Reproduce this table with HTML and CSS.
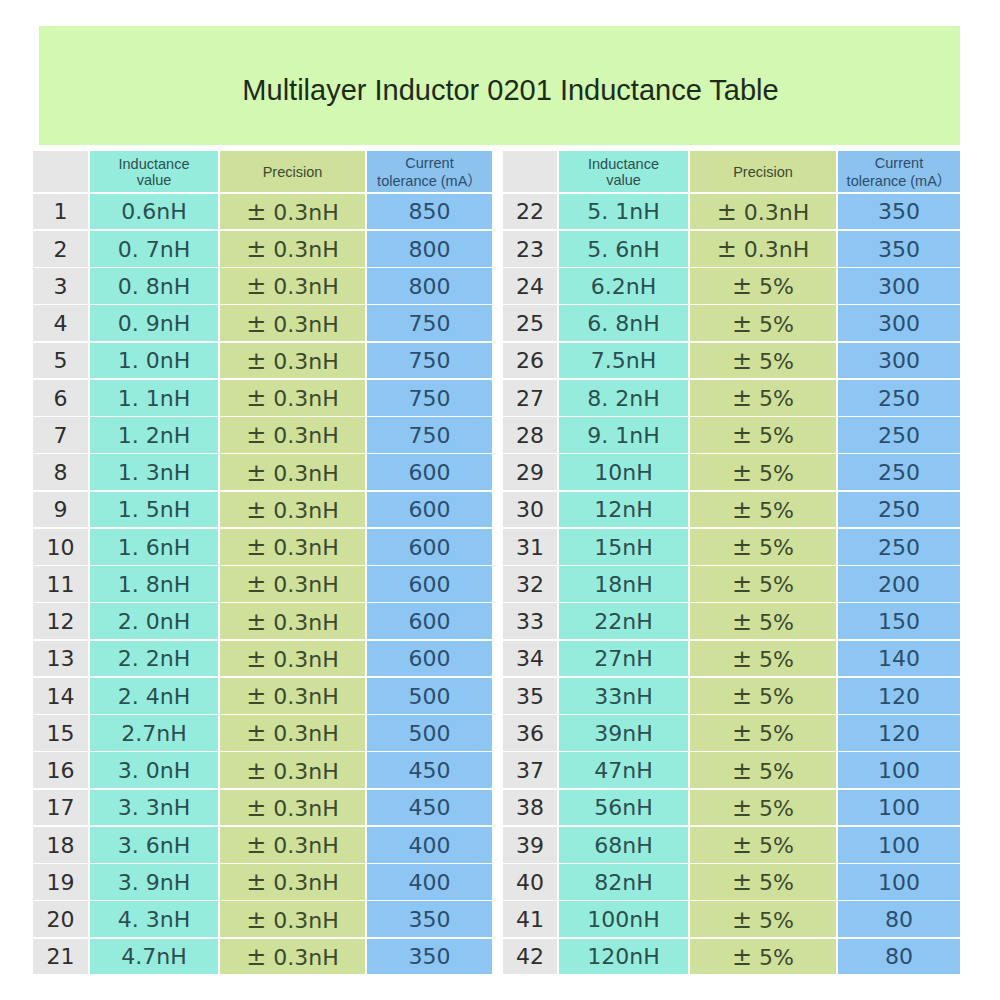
FILE: index.html
```html
<!DOCTYPE html>
<html>
<head>
<meta charset="utf-8">
<link rel="stylesheet" href="styles.css">
</head>
<body>
<div class="page">
  <div class="banner"><h1 class="title">Multilayer Inductor 0201 Inductance Table</h1></div>
  <div class="tables" id="tables"></div>
</div>
<script src="app.js"></script>
</body>
</html>
```
FILE: app.js
```js
const left = [
  ["0.6nH","± 0.3nH","850"],["0. 7nH","± 0.3nH","800"],["0. 8nH","± 0.3nH","800"],
  ["0. 9nH","± 0.3nH","750"],["1. 0nH","± 0.3nH","750"],["1. 1nH","± 0.3nH","750"],
  ["1. 2nH","± 0.3nH","750"],["1. 3nH","± 0.3nH","600"],["1. 5nH","± 0.3nH","600"],
  ["1. 6nH","± 0.3nH","600"],["1. 8nH","± 0.3nH","600"],["2. 0nH","± 0.3nH","600"],
  ["2. 2nH","± 0.3nH","600"],["2. 4nH","± 0.3nH","500"],["2.7nH","± 0.3nH","500"],
  ["3. 0nH","± 0.3nH","450"],["3. 3nH","± 0.3nH","450"],["3. 6nH","± 0.3nH","400"],
  ["3. 9nH","± 0.3nH","400"],["4. 3nH","± 0.3nH","350"],["4.7nH","± 0.3nH","350"]
];
const right = [
  ["5. 1nH","± 0.3nH","350"],["5. 6nH","± 0.3nH","350"],["6.2nH","± 5%","300"],
  ["6. 8nH","± 5%","300"],["7.5nH","± 5%","300"],["8. 2nH","± 5%","250"],
  ["9. 1nH","± 5%","250"],["10nH","± 5%","250"],["12nH","± 5%","250"],
  ["15nH","± 5%","250"],["18nH","± 5%","200"],["22nH","± 5%","150"],
  ["27nH","± 5%","140"],["33nH","± 5%","120"],["39nH","± 5%","120"],
  ["47nH","± 5%","100"],["56nH","± 5%","100"],["68nH","± 5%","100"],
  ["82nH","± 5%","100"],["100nH","± 5%","80"],["120nH","± 5%","80"]
];
function build(data, start, cls) {
  const t = document.createElement("div");
  t.className = "grid " + cls;
  let h = '<div class="c num hd"></div>' +
    '<div class="c ind hd">Inductance<br>value</div>' +
    '<div class="c pre hd">Precision</div>' +
    '<div class="c cur hd">Current<br>tolerance (mA\uFF09</div>';
  data.forEach((r, i) => {
    h += '<div class="c num">' + (start + i) + '</div>' +
      '<div class="c ind v">' + r[0] + '</div>' +
      '<div class="c pre v"><span><span class="pm">±</span>&nbsp;' + r[1].slice(2) + '</span></div>' +
      '<div class="c cur v">' + r[2] + '</div>';
  });
  t.innerHTML = h;
  return t;
}
const wrap = document.getElementById("tables");
wrap.appendChild(build(left, 1, "left"));
wrap.appendChild(build(right, 22, "right"));
```
FILE: styles.css
```css
html, body { margin: 0; padding: 0; background: #fff; }
.page { width: 1000px; height: 1000px; padding-top: 26px; box-sizing: border-box; }
.banner {
  margin-left: 39px; width: 921px; height: 119px;
  background: #d3f8b1;
  display: flex; align-items: center; justify-content: center;
  padding-top: 10px; box-sizing: border-box;
}
.title {
  margin: 0; padding-left: 22px;
  font-family: "Liberation Sans", Arial, sans-serif;
  font-weight: normal; font-size: 29px; color: #1d2b1a;
}
.tables { display: flex; gap: 11px; margin-left: 33px; margin-top: 6px; }
.grid {
  display: grid;
  grid-template-rows: 41px repeat(21, 35.75px);
  column-gap: 2px; row-gap: 1.5px;
  background: #fff;
}
.left { grid-template-columns: 55px 128px 145px 125px; }
.right { grid-template-columns: 54px 129px 146px 122px; }
.c {
  display: flex; align-items: center; justify-content: center; text-align: center;
  font-family: "DejaVu Sans", "Noto Sans CJK SC", sans-serif;
  font-size: 22px; padding-top: 1px; box-sizing: border-box;
}
.hd {
  font-family: "Liberation Sans", Arial, "Noto Sans CJK SC", sans-serif;
  font-size: 14.5px; line-height: 16px; color: #333; padding-top: 0;
}
.cur.hd { line-height: 18px; }
.num { background: #e6e6e6; color: #2e2e2e; }
.ind { background: #95ecdc; color: #2c4e4f; }
.pre { background: #cfe09b; color: #3b4a2f; }
.cur { background: #8dc6f3; color: #2c4d6c; }
.ind.hd { background: #96ecdc; }
.cur.hd { background: #8cc2ee; }
.pm { font-size: 24px; }
```
